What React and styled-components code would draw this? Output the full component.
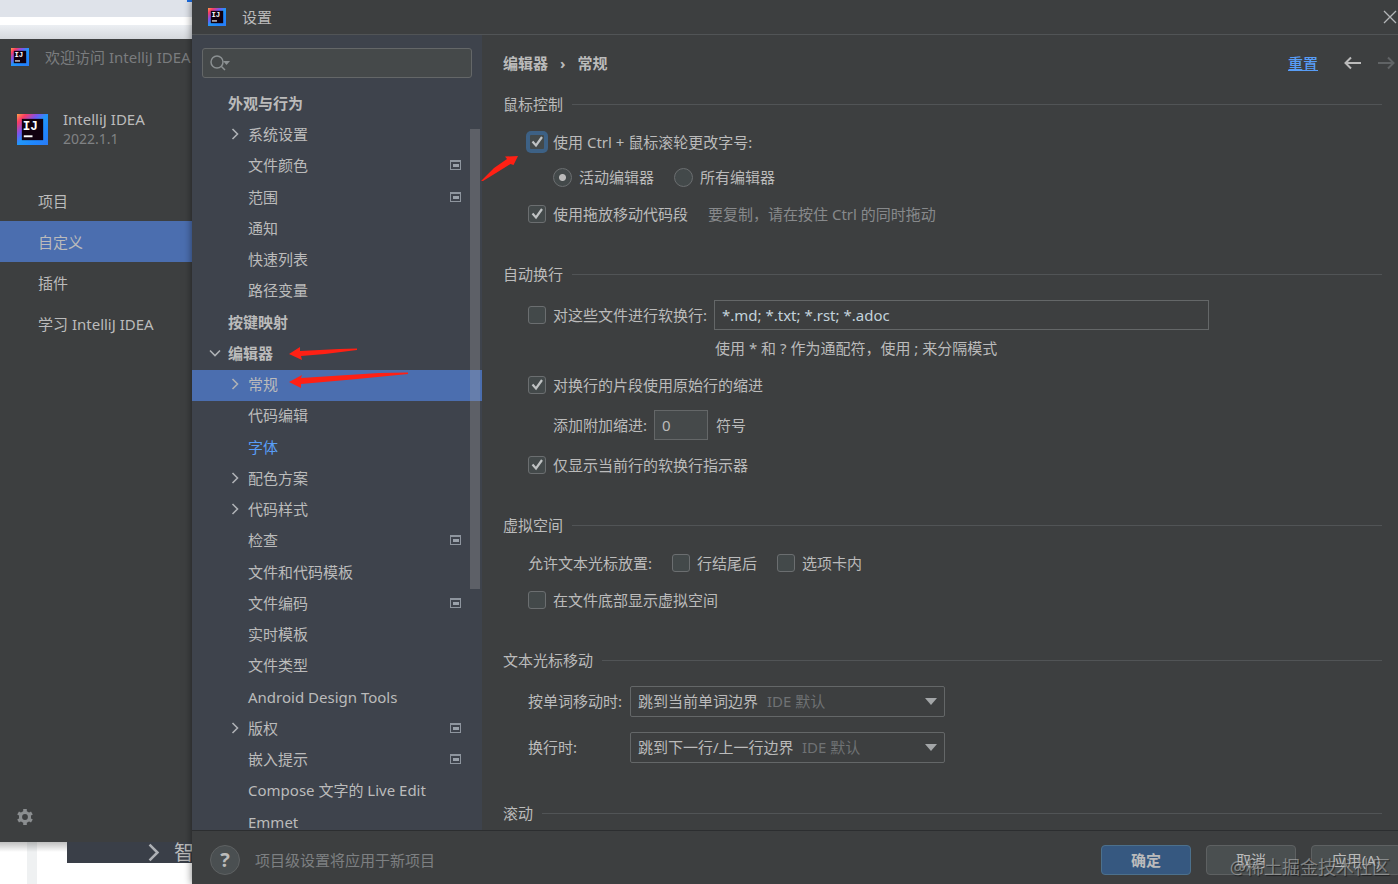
import React from "react";
import styled, { createGlobalStyle, css } from "styled-components";

const palette = {
  panel: "#3d3f40",
  tree: "#3e434c",
  text: "#bbbbbb",
  muted: "#7d8082",
  line: "#515456",
  field: "#45494a",
  fieldBorder: "#646768",
  selection: "#4b6eaf",
  link: "#589df6",
  red: "#ff2014",
};

const GlobalStyle = createGlobalStyle`
  * { box-sizing: border-box; }

  body {
    margin: 0;
    overflow: hidden;
    background: #ffffff;
    color: ${palette.text};
    font: 15px/20px "Noto Sans", "Noto Sans CJK SC", sans-serif;
  }

  button, input, select { font: inherit; color: inherit; }
  ul { list-style: none; margin: 0; padding: 0; }
`;

const Desktop = styled.div`
  position: relative;
  display: grid;
  grid-template-columns: 192px minmax(0, 1fr);
  height: 100vh;
  overflow: hidden;
`;

/* ---------- welcome window ---------- */

const Background = styled.div`
  display: flex;
  flex-direction: column;
  min-width: 0;
  overflow: hidden;
`;

const BrowserTop = styled.div`
  display: flex;
  justify-content: flex-end;
  height: 39px;
  background: linear-gradient(#dfe3ea 0 17px, #ffffff 17px 25px, #eceff3 25px, #d5d8dd);
`;

const BrowserTab = styled.span`
  width: 5px;
  height: 2px;
  background: #1a6be0;
`;

const BrowserBottom = styled.div`
  height: 42px;
  padding-left: 67px;
  background:
    linear-gradient(rgba(0, 0, 0, 0.25), transparent 10px),
    linear-gradient(90deg, transparent 27px, #eff1f2 27px 37px, transparent 37px);
`;

const BrowserMenu = styled.div`
  display: flex;
  align-items: center;
  gap: 11px;
  height: 21px;
  padding-left: 77px;
  overflow: hidden;
  background: #3a3f48;
  font-size: 20px;
  white-space: nowrap;

  svg { flex: none; }
`;

const Welcome = styled.section`
  flex: 1;
  display: flex;
  flex-direction: column;
  background: ${palette.panel};
  white-space: nowrap;
`;

const WelcomeTitle = styled.header`
  display: flex;
  align-items: center;
  gap: 16px;
  height: 36px;
  padding-left: 11px;
  color: #7a7c7e;

  svg { flex: none; }
`;

const Product = styled.div`
  display: flex;
  align-items: center;
  gap: 15px;
  padding: 34px 0 0 17px;
`;

const Version = styled.div`
  color: #808284;
  font-size: 14px;
`;

const WelcomeNav = styled.nav`
  flex: 1;
  padding-top: 31px;
`;

const NavItem = styled.a`
  display: flex;
  align-items: center;
  height: 41px;
  padding-left: 38px;
  color: ${palette.text};
  text-decoration: none;
  background: ${({ $active }) => ($active ? palette.selection : "none")};
`;

const IconButton = styled.button`
  display: flex;
  padding: 0;
  border: 0;
  background: none;
`;

const GearButton = styled(IconButton)`
  margin: 0 0 16px 16px;
`;

/* ---------- settings window ---------- */

const Dialog = styled.section`
  position: relative;
  display: flex;
  flex-direction: column;
  height: 100vh;
  margin-right: -17px;
  background: ${palette.panel};
  box-shadow: 0 0 8px rgba(0, 0, 0, 0.5);
`;

const TitleBar = styled.header`
  display: flex;
  align-items: center;
  gap: 16px;
  height: 35px;
  padding: 0 18px 0 16px;
  border-bottom: 1px solid ${palette.line};
`;

const CloseButton = styled(IconButton)`
  margin-left: auto;
`;

const Body = styled.div`
  flex: 1;
  display: flex;
  min-height: 0;
`;

const TreePane = styled.aside`
  position: relative;
  flex: none;
  width: 290px;
  overflow: hidden;
  background: ${palette.tree};
`;

const SearchBox = styled.label`
  display: flex;
  align-items: center;
  height: 30px;
  margin: 13px 10px 11px;
  padding-left: 7px;
  border: 1px solid ${palette.fieldBorder};
  border-radius: 3px;
  background: ${palette.field};

  input {
    flex: 1;
    min-width: 0;
    border: 0;
    outline: 0;
    background: none;
  }
`;

const TreeRow = styled.li`
  display: flex;
  align-items: center;
  height: 31px;
  padding: 0 21px 4px ${({ $top }) => ($top ? 10 : 30)}px;
  font-weight: ${({ $top }) => ($top ? 700 : 400)};
  color: ${({ $link }) => ($link ? palette.link : palette.text)};
  background: ${({ $selected }) => ($selected ? palette.selection : "none")};

  &:nth-child(4n + 3) { height: 32px; }
  > svg:last-child { margin-left: auto; }
`;

const ChevronSlot = styled.span`
  display: flex;
  justify-content: center;
  width: 26px;
`;

const ScrollThumb = styled.div`
  position: absolute;
  top: 94px;
  right: 2px;
  width: 10px;
  height: 460px;
  background: rgba(166, 166, 166, 0.3);
`;

const Content = styled.main`
  flex: 1;
  min-width: 0;
  padding: 0 33px 0 21px;
  overflow: hidden;
`;

const ContentHead = styled.div`
  display: flex;
  align-items: center;
  height: 56px;
  margin-right: -13px;
`;

const Crumbs = styled.div`
  flex: 1;
  display: flex;
  gap: 12px;
  font-weight: 700;
`;

const ResetLink = styled.a`
  margin-right: 26px;
  color: ${palette.link};
  font-weight: 500;
  text-underline-offset: 1px;
`;

const HistoryButton = styled(IconButton)`
  margin-left: ${({ $spaced }) => ($spaced ? 17 : 0)}px;
  color: ${({ disabled }) => (disabled ? "#606365" : palette.text)};
`;

const Section = styled.section`
  margin-bottom: ${({ $loose }) => ($loose ? 38 : 32)}px;
`;

const SectionTitle = styled.h2`
  display: flex;
  align-items: center;
  gap: 9px;
  height: 26px;
  margin: 0;
  font-size: 15px;
  font-weight: 400;

  &::after {
    content: "";
    flex: 1;
    border-top: 1px solid ${palette.line};
  }
`;

const Row = styled.div`
  display: flex;
  align-items: center;
  height: 30px;
  margin-top: ${({ $gap }) => $gap || 7}px;
  padding-left: ${({ $indent }) => $indent || 25}px;
`;

const Choice = styled.label`
  position: relative;
  display: flex;
  align-items: center;
  gap: 7px;
  margin-right: ${({ $after }) => $after || 20}px;

  svg {
    position: absolute;
    top: 50%;
    left: 3px;
    transform: translateY(-50%);
    pointer-events: none;
  }
`;

const Box = styled.input`
  appearance: none;
  width: 18px;
  height: 18px;
  margin: 0;
  border: 1px solid #6b6e70;
  border-radius: 3px;
  background: #43494a;

  ${({ $focused }) => $focused && css`
    border: 2px solid #3d6185;
    box-shadow: 0 0 0 2px #3d6185;
  `}
`;

const Radio = styled(Box)`
  width: 19px;
  height: 19px;
  border-radius: 50%;

  &:checked {
    background: radial-gradient(circle, ${palette.text} 3px, #43494a 4px);
  }
`;

const Hint = styled.span`
  color: #87898b;
`;

const DimHint = styled.span`
  color: #6f7274;
`;

const TextField = styled.input`
  width: ${({ $wide }) => ($wide ? 495 : 54)}px;
  height: 30px;
  padding: 0 7px;
  border: 1px solid ${palette.fieldBorder};
  outline: 0;
  color: ${({ $wide }) => ($wide ? "#c3d3dc" : palette.text)};
  background: ${({ $wide }) => ($wide ? "none" : palette.field)};
`;

const FieldLabel = styled.label`
  width: ${({ $column }) => ($column ? "102px" : "auto")};
  margin-right: ${({ $gap }) => $gap || 0}px;
`;

const GroupLabel = styled.span`
  margin-right: 20px;
`;

const Unit = styled.span`
  margin-left: 8px;
`;

const SelectBox = styled.div`
  display: flex;
  align-items: center;
  gap: 8px;
  width: 315px;
  height: 31px;
  padding: 0 7px;
  border: 1px solid ${palette.fieldBorder};
  border-radius: 2px;

  select {
    appearance: none;
    padding: 0;
    border: 0;
    outline: 0;
    background: none;
  }

  svg { margin-left: auto; }
`;

const Footer = styled.footer`
  display: flex;
  align-items: center;
  gap: 15px;
  padding: 14px 14px 9px 18px;
  border-top: 1px solid #2c2e30;
`;

const HelpButton = styled.button`
  width: 30px;
  height: 30px;
  padding: 0;
  border: 1px solid #5e6162;
  border-radius: 50%;
  background: #4a4f51;
  font-size: 20px;
  font-weight: 700;
`;

const FooterNote = styled.span`
  flex: 1;
  color: ${palette.muted};
`;

const Button = styled.button`
  width: 90px;
  height: 30px;
  padding: 0;
  border: 1px solid ${({ $primary }) => ($primary ? "#4c708c" : "#5e6162")};
  border-radius: 4px;
  background: ${({ $primary }) => ($primary ? "#365880" : "#4a4f50")};
  font-weight: ${({ $primary }) => ($primary ? 700 : 400)};
`;

/* hand drawn marks over the windows */
const Mark = styled.svg`
  position: absolute;
  top: ${({ $y }) => $y}px;
  left: ${({ $x }) => $x}px;
  fill: ${palette.red};
  pointer-events: none;
`;

const Watermark = styled.div`
  position: absolute;
  right: 8px;
  bottom: 5px;
  color: rgba(205, 205, 205, 0.5);
  font-size: 18px;
  line-height: 24px;
  text-shadow: 1px 1px 1px rgba(0, 0, 0, 0.5);
  pointer-events: none;
`;

/* ---------- icons ---------- */

const Logo = ({ size }) => (
  <svg width={size} height={size} viewBox="0 0 32 32">
    <defs>
      <linearGradient id="ij" x1="0" y1="0" x2="1" y2="1">
        <stop offset="0" stopColor="#ffa04a" />
        <stop offset="0.15" stopColor="#fb3a63" />
        <stop offset="0.34" stopColor="#7a55ee" />
        <stop offset="0.5" stopColor="#2196f8" />
        <stop offset="0.75" stopColor="#1f86ff" />
        <stop offset="1" stopColor="#2b7bf5" />
      </linearGradient>
    </defs>
    <rect width="32" height="32" fill="url(#ij)" />
    <rect x="5" y="5" width="22" height="22" fill="#10000f" />
    <text x="6" y="16" fill="#fff" fontFamily="Liberation Mono" fontSize="13" fontWeight="700">IJ</text>
    <rect x="7" y="22" width="9" height="2" fill="#fff" />
  </svg>
);

const Chevron = ({ down, size = 12 }) => (
  <svg width={size} height={size} viewBox="0 0 12 12" fill="none" stroke="#aeb1b5" strokeWidth="1.6">
    <path d={down ? "M1 3.5L6 8.5L11 3.5" : "M3.5 1L8.5 6L3.5 11"} />
  </svg>
);

const ProjectIcon = () => (
  <svg width="11" height="10" viewBox="0 0 11 10">
    <path d="M0 0H11V10H0ZM1 2V9H10V2Z" fill="#8e959e" fillRule="evenodd" />
    <rect x="3" y="4" width="6" height="3" fill="#9aa1aa" />
  </svg>
);

const CheckMark = () => (
  <svg width="13" height="13" viewBox="0 0 13 13" fill="none" stroke="#bfc2c3" strokeWidth="2.2">
    <path d="M1.5 6L5 10L11 1.5" />
  </svg>
);

const SearchIcon = () => (
  <svg width="22" height="18" viewBox="0 0 22 18" fill="none" stroke="#8b9092" strokeWidth="1.5">
    <circle cx="7" cy="8" r="6" />
    <path d="M11.2 12.2L15 16" />
    <path d="M13 7H20L16.500 11Z" fill="#8b9092" stroke="none" />
  </svg>
);

const GearIcon = () => (
  <svg width="18" height="18" viewBox="0 0 18 18" fill="none" stroke="#8b8e90">
    <circle cx="9" cy="9" r="4.500" strokeWidth="3.200" />
    <path
      d="M9 1V4M9 14V17M2.100 5L4.700 6.500M13.300 11.500L15.900 13M2.100 13L4.700 11.500M13.300 6.500L15.900 5"
      strokeWidth="3.600"
    />
  </svg>
);

const CloseIcon = () => (
  <svg width="14" height="14" viewBox="0 0 14 14" stroke="#b4b6b8" strokeWidth="1.3">
    <path d="M1 1L13 13M13 1L1 13" />
  </svg>
);

const ArrowIcon = ({ forward }) => (
  <svg width="17" height="14" viewBox="0 0 17 14" fill="none" stroke="currentColor" strokeWidth="2">
    <path d={forward ? "M0 7H15M10 1.500L15.500 7L10 12.500" : "M17 7H2M7 1.500L1.500 7L7 12.500"} />
  </svg>
);

const Triangle = () => (
  <svg width="12" height="7" viewBox="0 0 12 7" fill="#a3a6a8">
    <path d="M0 0H12L6 7Z" />
  </svg>
);

/* ---------- parts ---------- */

const tree = [
  { label: "外观与行为", top: true },
  { label: "系统设置", chevron: true },
  { label: "文件颜色", project: true },
  { label: "范围", project: true },
  { label: "通知" },
  { label: "快速列表" },
  { label: "路径变量" },
  { label: "按键映射", top: true },
  { label: "编辑器", top: true, chevron: true },
  { label: "常规", chevron: true, selected: true },
  { label: "代码编辑" },
  { label: "字体", link: true },
  { label: "配色方案", chevron: true },
  { label: "代码样式", chevron: true },
  { label: "检查", project: true },
  { label: "文件和代码模板" },
  { label: "文件编码", project: true },
  { label: "实时模板" },
  { label: "文件类型" },
  { label: "Android Design Tools" },
  { label: "版权", chevron: true, project: true },
  { label: "嵌入提示", project: true },
  { label: "Compose 文字的 Live Edit" },
  { label: "Emmet" },
];

const CheckBox = ({ children, checked, focused, after }) => (
  <Choice $after={after}>
    <Box type="checkbox" defaultChecked={checked} $focused={focused} />
    {checked && <CheckMark />}
    {children}
  </Choice>
);

const Dropdown = ({ id, value }) => (
  <SelectBox>
    <select id={id}>
      <option>{value}</option>
    </select>
    <DimHint>IDE 默认</DimHint>
    <Triangle />
  </SelectBox>
);

const WelcomeWindow = () => (
  <Background>
    <BrowserTop><BrowserTab /></BrowserTop>
    <Welcome>
      <WelcomeTitle><Logo size={18} />欢迎访问 IntelliJ IDEA</WelcomeTitle>
      <Product>
        <Logo size={31} />
        <div>
          <div>IntelliJ IDEA</div>
          <Version>2022.1.1</Version>
        </div>
      </Product>
      <WelcomeNav>
        <NavItem href="#projects">项目</NavItem>
        <NavItem href="#customize" $active>自定义</NavItem>
        <NavItem href="#plugins">插件</NavItem>
        <NavItem href="#learn">学习 IntelliJ IDEA</NavItem>
      </WelcomeNav>
      <GearButton aria-label="选项"><GearIcon /></GearButton>
    </Welcome>
    <BrowserBottom>
      <BrowserMenu><Chevron size={19} />智</BrowserMenu>
    </BrowserBottom>
  </Background>
);

const SettingsTree = () => (
  <TreePane>
    <SearchBox>
      <SearchIcon />
      <input type="text" aria-label="搜索" />
    </SearchBox>
    <ul>
      {tree.map(({ label, top, chevron, project, selected, link }) => (
        <TreeRow key={label} $top={top} $selected={selected} $link={link}>
          <ChevronSlot>{chevron && <Chevron down={top} />}</ChevronSlot>
          <span>{label}</span>
          {project && <ProjectIcon />}
        </TreeRow>
      ))}
    </ul>
    <ScrollThumb />
  </TreePane>
);

const GeneralSettings = () => (
  <Content>
    <ContentHead>
      <Crumbs><span>编辑器</span><span>›</span><span>常规</span></Crumbs>
      <ResetLink href="#reset">重置</ResetLink>
      <HistoryButton aria-label="后退"><ArrowIcon /></HistoryButton>
      <HistoryButton aria-label="前进" $spaced disabled><ArrowIcon forward /></HistoryButton>
    </ContentHead>

    <Section>
      <SectionTitle>鼠标控制</SectionTitle>
      <Row $gap={10}>
        <CheckBox checked focused>使用 Ctrl + 鼠标滚轮更改字号:</CheckBox>
      </Row>
      <Row $gap={5} $indent={50}>
        <Choice><Radio type="radio" name="scope" defaultChecked />活动编辑器</Choice>
        <Choice><Radio type="radio" name="scope" />所有编辑器</Choice>
      </Row>
      <Row>
        <CheckBox checked>使用拖放移动代码段</CheckBox>
        <Hint>要复制，请在按住 Ctrl 的同时拖动</Hint>
      </Row>
    </Section>

    <Section>
      <SectionTitle>自动换行</SectionTitle>
      <Row $gap={13}>
        <CheckBox after={7}>对这些文件进行软换行:</CheckBox>
        <TextField $wide aria-label="文件" defaultValue="*.md; *.txt; *.rst; *.adoc" />
      </Row>
      <Row $gap={3} $indent={212}>使用 * 和 ? 作为通配符，使用 ; 来分隔模式</Row>
      <Row>
        <CheckBox checked>对换行的片段使用原始行的缩进</CheckBox>
      </Row>
      <Row $gap={10} $indent={50}>
        <FieldLabel htmlFor="indent" $gap={7}>添加附加缩进:</FieldLabel>
        <TextField id="indent" defaultValue="0" />
        <Unit>符号</Unit>
      </Row>
      <Row $gap={10}>
        <CheckBox checked>仅显示当前行的软换行指示器</CheckBox>
      </Row>
    </Section>

    <Section>
      <SectionTitle>虚拟空间</SectionTitle>
      <Row $gap={10}>
        <GroupLabel>允许文本光标放置:</GroupLabel>
        <CheckBox>行结尾后</CheckBox>
        <CheckBox>选项卡内</CheckBox>
      </Row>
      <Row>
        <CheckBox>在文件底部显示虚拟空间</CheckBox>
      </Row>
    </Section>

    <Section $loose>
      <SectionTitle>文本光标移动</SectionTitle>
      <Row $gap={13}>
        <FieldLabel htmlFor="word" $column>按单词移动时:</FieldLabel>
        <Dropdown id="word" value="跳到当前单词边界" />
      </Row>
      <Row $gap={16}>
        <FieldLabel htmlFor="line" $column>换行时:</FieldLabel>
        <Dropdown id="line" value="跳到下一行/上一行边界" />
      </Row>
    </Section>

    <SectionTitle>滚动</SectionTitle>
  </Content>
);

export default () => (
  <Desktop>
    <GlobalStyle />
    <WelcomeWindow />
    <Dialog>
      <TitleBar>
        <Logo size={18} />
        设置
        <CloseButton aria-label="关闭"><CloseIcon /></CloseButton>
      </TitleBar>
      <Body>
        <SettingsTree />
        <GeneralSettings />
      </Body>
      <Footer>
        <HelpButton>?</HelpButton>
        <FooterNote>项目级设置将应用于新项目</FooterNote>
        <Button $primary>确定</Button>
        <Button>取消</Button>
        <Button>应用(A)</Button>
      </Footer>
    </Dialog>
    <Mark $x={481} $y={155} width="38" height="27">
      <path d="M0 26L13 13L26 4L24 1.500L37 1L32.500 10L29.500 9L15 18L2 26Z" />
    </Mark>
    <Mark $x={289} $y={346} width="68" height="15">
      <path d="M0 8L11 1L11 5L50 3L68 2.500L68 4L36 8L12 10L13 14Z" />
    </Mark>
    <Mark $x={289} $y={372} width="120" height="17">
      <path d="M0 10L13 3L12 6L90 1L119 0.500L119 2L68 7L12 12L12 16Z" />
    </Mark>
    <Watermark>@稀土掘金技术社区</Watermark>
  </Desktop>
);
